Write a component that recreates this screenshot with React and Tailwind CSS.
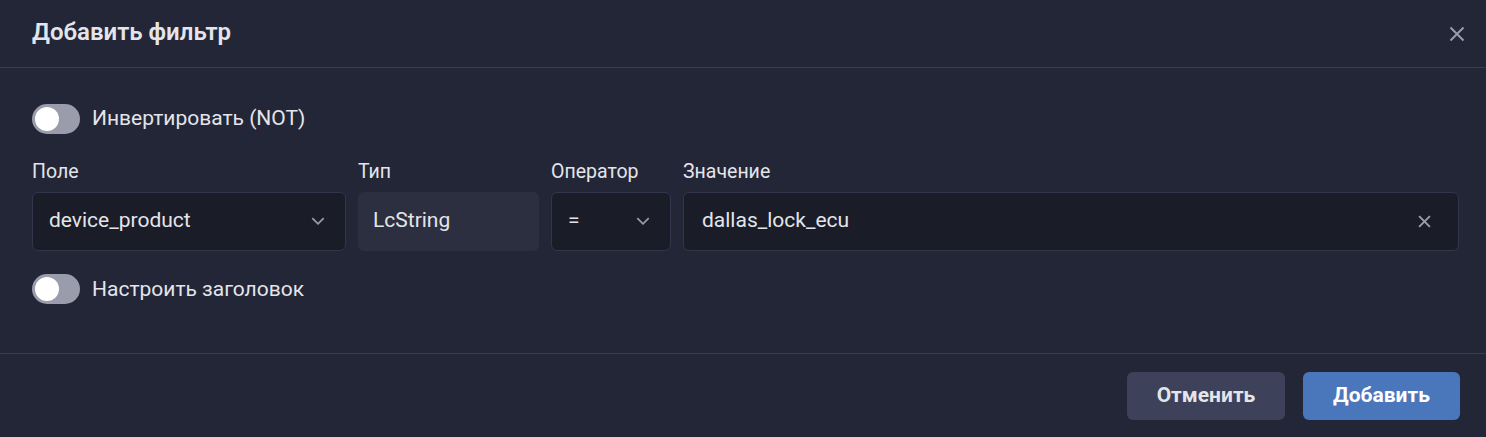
import { useState } from 'react';

function Toggle({ label, checked, onChange }) {
  return (
    <label className="flex items-center gap-3 cursor-pointer select-none">
      <button
        type="button"
        onClick={() => onChange(!checked)}
        className={`relative w-12 h-[30px] rounded-full transition-colors ${checked ? 'bg-[#4a77bb]' : 'bg-[#9a9cab]'}`}
      >
        <span
          className={`absolute top-[3px] w-6 h-6 rounded-full bg-white transition-all ${checked ? 'left-[21px]' : 'left-[3px]'}`}
        />
      </button>
      <span className="text-[21px] text-[#e4e5ea]">{label}</span>
    </label>
  );
}

const Chevron = () => (
  <svg width="16" height="16" viewBox="0 0 14 14" fill="none" stroke="#9a9cab" strokeWidth="1.5">
    <path d="M2 4.5l5 5 5-5" />
  </svg>
);

export default function App() {
  const [invert, setInvert] = useState(false);
  const [customTitle, setCustomTitle] = useState(false);
  const [value, setValue] = useState('dallas_lock_ecu');

  return (
    <div className="w-[1486px] h-[437px] bg-[#232636] text-[#e4e5ea] flex flex-col" style={{ fontFamily: 'Roboto, "Noto Sans", sans-serif' }}>
      {/* header */}
      <div className="h-[68px] shrink-0 flex items-center justify-between pl-8 pr-[17px] border-b border-[#3a3d50]">
        <h2 className="text-[24px] font-semibold text-[#e4e5ea] -mt-[3px]">Добавить фильтр</h2>
        <button className="w-6 h-6 flex items-center justify-center">
          <svg width="16" height="16" viewBox="0 0 16 16" stroke="#9a9cab" strokeWidth="2">
            <path d="M1.5 1.5l13 13M14.5 1.5l-13 13" />
          </svg>
        </button>
      </div>

      {/* body */}
      <div className="flex-1 pl-8 pr-[27px] pt-[35px]">
        <Toggle label="Инвертировать (NOT)" checked={invert} onChange={setInvert} />

        <div className="flex gap-3 mt-[25px]">
          <div className="w-[314px] flex flex-col gap-[8px]">
            <span className="text-[19.5px] leading-[24px]">Поле</span>
            <div className="h-[59px] rounded-md bg-[#1a1c27] border border-[#33364a] flex items-center justify-between pl-4 pr-[19px]">
              <span className="text-[21px]">device_product</span>
              <Chevron />
            </div>
          </div>
          <div className="w-[181px] flex flex-col gap-[8px]">
            <span className="text-[19.5px] leading-[24px]">Тип</span>
            <div className="h-[59px] rounded-md bg-[#2c2f40] flex items-center pl-[15px]">
              <span className="text-[21px]">LcString</span>
            </div>
          </div>
          <div className="w-[120px] flex flex-col gap-[8px]">
            <span className="text-[19.5px] leading-[24px]">Оператор</span>
            <div className="h-[59px] rounded-md bg-[#1a1c27] border border-[#33364a] flex items-center justify-between pl-4 pr-[19px]">
              <span className="text-[21px]">=</span>
              <Chevron />
            </div>
          </div>
          <div className="flex-1 flex flex-col gap-[8px]">
            <span className="text-[19.5px] leading-[24px]">Значение</span>
            <div className="h-[59px] rounded-md bg-[#1a1c27] border border-[#33364a] flex items-center justify-between pl-[18px] pr-[27px]">
              <input
                value={value}
                onChange={(e) => setValue(e.target.value)}
                className="bg-transparent outline-none text-[21px] text-[#e4e5ea] flex-1"
              />
              <button onClick={() => setValue('')}>
                <svg width="13" height="13" viewBox="0 0 12 12" stroke="#9a9cab" strokeWidth="1.8">
                  <path d="M1 1l10 10M11 1L1 11" />
                </svg>
              </button>
            </div>
          </div>
        </div>

        <div className="mt-[23px]">
          <Toggle label="Настроить заголовок" checked={customTitle} onChange={setCustomTitle} />
        </div>
      </div>

      {/* footer */}
      <div className="h-[84px] shrink-0 border-t border-[#3a3d50] flex items-start justify-end gap-[18px] pt-[18px] pr-[26px]">
        <button className="w-[158px] h-[48px] rounded-md bg-[#3d4159] text-[21px] font-bold text-[#e4e5ea]">Отменить</button>
        <button className="w-[157px] h-[48px] rounded-md bg-[#4a77bb] text-[21px] font-bold text-white">Добавить</button>
      </div>
    </div>
  );
}
